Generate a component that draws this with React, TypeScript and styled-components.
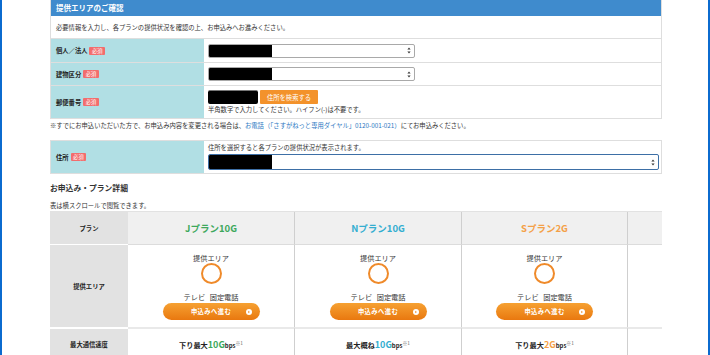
import React from "react";
import styled, { createGlobalStyle } from "styled-components";

const GlobalStyle = createGlobalStyle`
  html, body { margin: 0; padding: 0; background: #fff; }
  body {
    font-family: "Noto Sans CJK JP", "Noto Sans", sans-serif;
    color: #333;
  }
  * { box-sizing: border-box; }
`;

const Frame = styled.div`
  width: 710px;
  height: 355px;
  overflow: hidden;
  border-left: 2px solid #0b6bcf;
  border-right: 2px solid #0b6bcf;
  padding-left: 48px;
`;

const Content = styled.div`
  width: 612px;
`;

const Panel = styled.section<{ $top?: boolean }>`
  border: 1px solid #dedede;
  border-top: ${(p) => (p.$top ? "1px solid #dedede" : "none")};
  background: #fff;
`;

const PanelHead = styled.h2`
  margin: 0;
  height: 16px;
  padding-left: 5px;
  background: #3f8bcd;
  color: #fff;
  font-size: 7.5px;
  font-weight: 700;
  line-height: 16px;
`;

const Intro = styled.p`
  margin: 0;
  height: 23px;
  padding-left: 5px;
  font-size: 6.3px;
  line-height: 23px;
  color: #333;
  border-bottom: 1px solid #dedede;
`;

const FormRow = styled.div<{ $h: number; $last?: boolean }>`
  display: grid;
  grid-template-columns: 153px 1fr;
  height: ${(p) => p.$h}px;
  border-bottom: ${(p) => (p.$last ? "none" : "1px solid #dedede")};
`;

const FormLabel = styled.div`
  display: flex;
  align-items: center;
  gap: 2px;
  padding-left: 5px;
  background: #b1dfe4;
  font-size: 6.3px;
  font-weight: 700;
  color: #222;
`;

const Required = styled.span`
  display: inline-block;
  padding: 0 2.5px;
  height: 8px;
  line-height: 8px;
  background: #f26d6d;
  color: #fff;
  font-size: 5.3px;
  font-weight: 400;
  border-radius: 1px;
`;

const FormValue = styled.div<{ $pad?: number }>`
  display: flex;
  flex-direction: column;
  justify-content: center;
  gap: 2px;
  padding: 0 4px;
`;

const Select = styled.div<{ $w: number; $h: number; $focus?: boolean }>`
  display: flex;
  align-items: stretch;
  width: ${(p) => p.$w}px;
  height: ${(p) => p.$h}px;
  background: #fff;
  border: ${(p) => (p.$focus ? "1.5px solid #3d6fa6" : "1px solid #a9a9a9")};
  border-radius: 2px;
  overflow: hidden;
`;

const Redact = styled.div<{ $w: number }>`
  width: ${(p) => p.$w}px;
  background: #000;
`;

const Arrows = styled.div`
  display: flex;
  align-items: center;
  margin-left: auto;
  padding-right: 3px;
`;

const ZipLine = styled.div`
  display: flex;
  align-items: center;
  gap: 2px;
`;

const ZipInput = styled.div`
  width: 50px;
  height: 14px;
  background: #000;
  border-radius: 2px;
  border-top: 1px solid #777;
`;

const SearchButton = styled.button`
  width: 58px;
  height: 14px;
  padding: 0;
  border: none;
  border-radius: 1px;
  background: #f3922b;
  color: #fff;
  font-family: inherit;
  font-size: 6.3px;
`;

const Small = styled.div`
  font-size: 6.3px;
  line-height: 8px;
  color: #333;
`;

const Note = styled.p`
  margin: 0;
  font-size: 6.3px;
  line-height: 14px;
  color: #333;
`;

const Link = styled.span`
  color: #2a78c2;
`;

const Spacer = styled.div<{ $h: number }>`
  height: ${(p) => p.$h}px;
`;

const SectionTitle = styled.h3`
  margin: 7px 0 0;
  font-size: 7.8px;
  line-height: 14px;
  font-weight: 700;
  color: #333;
`;

const Caption = styled.p`
  margin: 6px 0 0;
  font-size: 6.3px;
  line-height: 10px;
  color: #333;
`;

const PlanTable = styled.div`
  display: grid;
  grid-template-columns: 78px 167px 167px 166px 34px;
  grid-template-rows: 33px 82px 32px;
  border-top: 1px solid #e2e2e2;
`;

type Kind = "label" | "plan" | "blank";

const Cell = styled.div<{ $kind: Kind; $head?: boolean; $split?: boolean }>`
  display: flex;
  flex-direction: column;
  align-items: center;
  justify-content: center;
  background: ${(p) =>
    p.$kind === "label" ? "#e2e2e2" : p.$head ? "#f0f0f0" : "#fff"};
  border-right: ${(p) => (p.$kind === "plan" ? "1px solid #cfcfcf" : "none")};
  border-bottom: ${(p) =>
    p.$head ? (p.$kind === "label" ? "1px solid #fff" : "1px solid #dcdcdc") : "none"};
  border-top: ${(p) =>
    p.$split ? (p.$kind === "label" ? "2px solid #fff" : "2px solid #e9e9e9") : "none"};
`;

const RowLabel = styled.span`
  font-size: 6.3px;
  font-weight: 700;
  color: #222;
`;

const PlanName = styled.span<{ $c: string }>`
  font-size: 9.5px;
  font-weight: 700;
  color: ${(p) => p.$c};
`;

const AreaCell = styled(Cell)`
  justify-content: flex-start;
  padding-top: 8px;
`;

const AreaText = styled.span`
  font-size: 7.2px;
  line-height: 10px;
  color: #333;
`;

const Ring = styled.div`
  width: 21px;
  height: 21px;
  border: 2.2px solid #ef8a2a;
  border-radius: 50%;
`;

const Services = styled(AreaText)`
  margin-top: 8px;
  word-spacing: 3px;
`;

const ApplyButton = styled.button`
  display: grid;
  grid-template-columns: 1fr auto 1fr;
  align-items: center;
  width: 97px;
  height: 17px;
  margin-top: 1px;
  padding: 0 8px;
  border: none;
  border-radius: 9px;
  background: linear-gradient(180deg, #f6a132 0%, #e9780f 100%);
  color: #fff;
  font-family: inherit;
  font-size: 6.3px;
  font-weight: 700;
  letter-spacing: 0.4px;

  span {
    grid-column: 2;
  }
  svg {
    grid-column: 3;
    justify-self: end;
  }
`;

const Speed = styled.span`
  font-size: 7.2px;
  font-weight: 700;
  color: #222;
`;

const SpeedNum = styled.span<{ $c: string }>`
  font-size: 9px;
  color: ${(p) => p.$c};
`;

const Bps = styled.span`
  font-size: 6px;
`;

const Sup = styled.sup`
  font-size: 4.8px;
  font-weight: 400;
  color: #666;
`;

const SelectArrows = () => (
  <Arrows>
    <svg width="4" height="7" viewBox="0 0 4 7">
      <path d="M2 0.5 L3.6 2.6 H0.4 Z" fill="#333" />
      <path d="M2 6.5 L3.6 4.4 H0.4 Z" fill="#333" />
    </svg>
  </Arrows>
);

const GoIcon = () => (
  <svg width="6" height="6" viewBox="0 0 6 6">
    <circle cx="3" cy="3" r="3" fill="#fff" />
    <path d="M2.3 1.7 L3.8 3 L2.3 4.3 Z" fill="#ec8118" />
  </svg>
);

const plans = [
  { name: "Jプラン10G", color: "#3da85c", prefix: "下り最大", num: "10G" },
  { name: "Nプラン10G", color: "#34aed0", prefix: "最大概ね", num: "10G" },
  { name: "Sプラン2G", color: "#f4a047", prefix: "下り最大", num: "2G" },
];

export default function App() {
  return (
    <>
      <GlobalStyle />
      <Frame>
        <Content>
          <Panel>
            <PanelHead>提供エリアのご確認</PanelHead>
            <Intro>
              必要情報を入力し、各プランの提供状況を確認の上、お申込みへお進みください。
            </Intro>
            <FormRow $h={24}>
              <FormLabel>
                個人／法人<Required>必須</Required>
              </FormLabel>
              <FormValue>
                <Select $w={207} $h={14}>
                  <Redact $w={63} />
                  <SelectArrows />
                </Select>
              </FormValue>
            </FormRow>
            <FormRow $h={23}>
              <FormLabel>
                建物区分<Required>必須</Required>
              </FormLabel>
              <FormValue>
                <Select $w={207} $h={14}>
                  <Redact $w={63} />
                  <SelectArrows />
                </Select>
              </FormValue>
            </FormRow>
            <FormRow $h={32} $last>
              <FormLabel>
                郵便番号<Required>必須</Required>
              </FormLabel>
              <FormValue>
                <ZipLine>
                  <ZipInput />
                  <SearchButton>住所を検索する</SearchButton>
                </ZipLine>
                <Small>半角数字で入力してください。ハイフン(-)は不要です。</Small>
              </FormValue>
            </FormRow>
          </Panel>

          <Note>
            ※すでにお申込いただいた方で、お申込み内容を変更される場合は、
            <Link>お電話（「さすがねっと専用ダイヤル」0120-001-021）</Link>
            にてお申込みください。
          </Note>

          <Spacer $h={7} />
          <Panel $top>
            <FormRow $h={32} $last>
              <FormLabel>
                住所<Required>必須</Required>
              </FormLabel>
              <FormValue>
                <Small>住所を選択すると各プランの提供状況が表示されます。</Small>
                <Select $w={451} $h={16} $focus>
                  <Redact $w={63} />
                  <SelectArrows />
                </Select>
              </FormValue>
            </FormRow>
          </Panel>

          <SectionTitle>お申込み・プラン詳細</SectionTitle>
          <Caption>表は横スクロールで閲覧できます。</Caption>

          <PlanTable>
            <Cell $kind="label" $head>
              <RowLabel>プラン</RowLabel>
            </Cell>
            {plans.map((p) => (
              <Cell key={p.name} $kind="plan" $head>
                <PlanName $c={p.color}>{p.name}</PlanName>
              </Cell>
            ))}
            <Cell $kind="blank" $head />

            <Cell $kind="label">
              <RowLabel>提供エリア</RowLabel>
            </Cell>
            {plans.map((p) => (
              <AreaCell key={p.name} $kind="plan">
                <AreaText>提供エリア</AreaText>
                <Ring />
                <Services>テレビ 固定電話</Services>
                <ApplyButton>
                  <span>申込みへ進む</span>
                  <GoIcon />
                </ApplyButton>
              </AreaCell>
            ))}
            <Cell $kind="blank" />

            <Cell $kind="label" $split>
              <RowLabel>最大通信速度</RowLabel>
            </Cell>
            {plans.map((p) => (
              <Cell key={p.name} $kind="plan" $split>
                <Speed>
                  {p.prefix}
                  <SpeedNum $c={p.color}>{p.num}</SpeedNum>
                  <Bps>bps</Bps>
                  <Sup>※1</Sup>
                </Speed>
              </Cell>
            ))}
            <Cell $kind="blank" $split />
          </PlanTable>
        </Content>
      </Frame>
    </>
  );
}
